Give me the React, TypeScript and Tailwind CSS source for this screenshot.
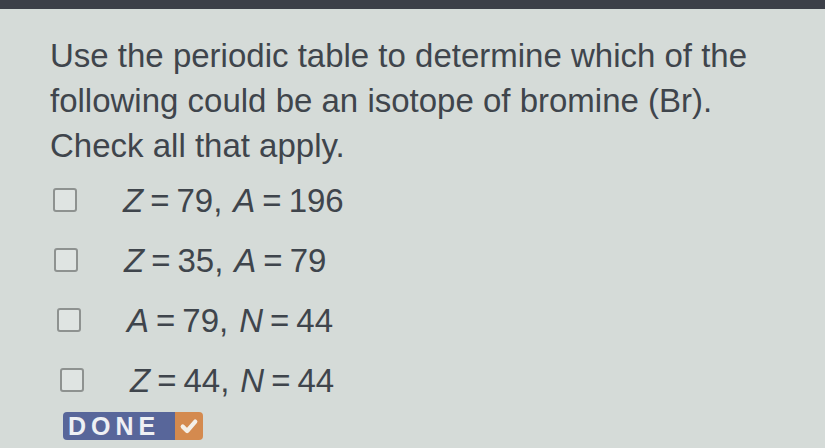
const options: { a: [string, string]; b: [string, string]; pad: string }[] = [
  { a: ["Z", "79"], b: ["A", "196"], pad: "pl-[3px]" },
  { a: ["Z", "35"], b: ["A", "79"], pad: "pl-[4px]" },
  { a: ["A", "79"], b: ["N", "44"], pad: "pl-[7px]" },
  { a: ["Z", "44"], b: ["N", "44"], pad: "pl-[10px]" },
];

function Term({ v, n }: { v: string; n: string }) {
  return (
    <span>
      <span className="italic">{v}</span>
      <span className="mx-[7px]">=</span>
      <span>{n}</span>
    </span>
  );
}

export default function App() {
  return (
    <div className="flex h-[448px] w-[825px] flex-col overflow-hidden bg-[#d5dbd8] font-['Liberation_Sans',Arial,sans-serif] text-[#3f454c]">
      <div className="h-[9px] w-full bg-[#3c4048]" />
      <div className="px-[50px] pt-[24px]">
        <p className="text-[33px] leading-[45px]">
          Use the periodic table to determine which of the
          <br />
          following could be an isotope of bromine (Br).
          <br />
          Check all that apply.
        </p>
        <div className="mt-[17px] flex flex-col gap-[30px]">
          {options.map((o, i) => (
            <label key={i} className={`flex h-[30px] items-center ${o.pad}`}>
              <span className="h-[24px] w-[24px] shrink-0 rounded-[3px] border-2 border-[#8e9290] bg-[#dfe4e2]" />
              <span className="ml-[46px] text-[33px] leading-none">
                <Term v={o.a[0]} n={o.a[1]} />
                <span className="mr-[11px]">,</span>
                <Term v={o.b[0]} n={o.b[1]} />
              </span>
            </label>
          ))}
        </div>
        <button
          type="button"
          className="ml-[13px] mt-[17px] flex h-[28px] overflow-hidden rounded-[4px]"
        >
          <span className="flex w-[112px] items-center bg-[#58669a] pl-[5px] text-[25px] font-bold leading-none tracking-[5px] text-[#eef0f4]">
            DONE
          </span>
          <span className="flex w-[28px] items-center justify-center bg-[#d48a4f]">
            <svg viewBox="0 0 16 16" className="h-[20px] w-[20px]" fill="none" stroke="#f4efe8" strokeWidth="3.4" strokeLinecap="round" strokeLinejoin="round">
              <path d="M3 8.5 L6.5 12 L13 4.5" />
            </svg>
          </span>
        </button>
      </div>
    </div>
  );
}
